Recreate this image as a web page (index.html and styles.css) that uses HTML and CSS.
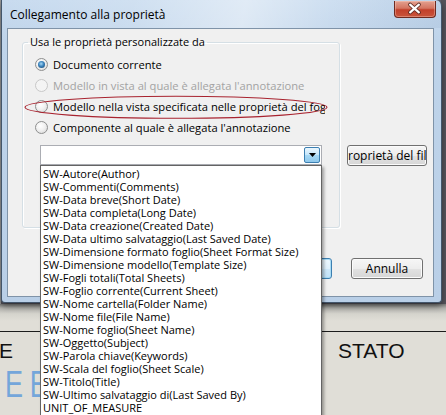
FILE: index.html
```html
<!DOCTYPE html>
<html lang="it">
<head>
<meta charset="utf-8">
<title>Collegamento alla proprietà</title>
<link rel="stylesheet" href="styles.css">
</head>
<body>
<div class="screen">
  <div class="desk">
    <div class="window">
      <div class="titlebar">
        <span class="title">Collegamento alla proprietà</span>
        <div class="close">
          <svg width="42" height="17" viewBox="0 0 42 17">
            <path d="M16.5 4.5 L25.5 12.5 M25.5 4.5 L16.5 12.5" stroke="#5b2a22" stroke-width="4" stroke-linecap="round"/>
            <path d="M16.5 4.5 L25.5 12.5 M25.5 4.5 L16.5 12.5" stroke="#ffffff" stroke-width="2.2" stroke-linecap="round"/>
          </svg>
        </div>
      </div>
      <div class="client">
        <div class="main">
          <fieldset class="group">
            <legend>Usa le proprietà personalizzate da</legend>
            <div class="radio"><span class="dot checked"></span><span class="lbl">Documento corrente</span></div>
            <div class="radio disabled"><span class="dot"></span><span class="lbl">Modello in vista al quale è allegata l'annotazione</span></div>
            <div class="radio"><span class="dot"></span><span class="lbl clip">Modello nella vista specificata nelle proprietà del foglio</span></div>
            <div class="radio"><span class="dot"></span><span class="lbl">Componente al quale è allegata l'annotazione</span></div>
            <div class="combo">
              <div class="combo-field"></div>
              <div class="combo-btn">
                <svg width="7" height="4" viewBox="0 0 7 4"><path d="M0 0 H7 L3.5 4 Z" fill="#000"/></svg>
              </div>
            </div>
          </fieldset>
          <div class="btn side"><span>Proprietà del file</span></div>
        </div>
        <div class="actions">
          <div class="btn ok">OK</div>
          <div class="btn cancel">Annulla</div>
        </div>
      </div>
    </div>
  </div>
  <div class="sheet">
    <div class="sheet-head"></div>
    <div class="labels">
      <span class="lab-e">E</span>
      <span class="lab-stato">STATO</span>
    </div>
    <div class="big"><span>EE</span></div>
  </div>
  <ul class="list">
    <li>SW-Autore(Author)</li>
    <li>SW-Commenti(Comments)</li>
    <li>SW-Data breve(Short Date)</li>
    <li>SW-Data completa(Long Date)</li>
    <li>SW-Data creazione(Created Date)</li>
    <li>SW-Data ultimo salvataggio(Last Saved Date)</li>
    <li>SW-Dimensione formato foglio(Sheet Format Size)</li>
    <li>SW-Dimensione modello(Template Size)</li>
    <li>SW-Fogli totali(Total Sheets)</li>
    <li>SW-Foglio corrente(Current Sheet)</li>
    <li>SW-Nome cartella(Folder Name)</li>
    <li>SW-Nome file(File Name)</li>
    <li>SW-Nome foglio(Sheet Name)</li>
    <li>SW-Oggetto(Subject)</li>
    <li>SW-Parola chiave(Keywords)</li>
    <li>SW-Scala del foglio(Sheet Scale)</li>
    <li>SW-Titolo(Title)</li>
    <li>SW-Ultimo salvataggio di(Last Saved By)</li>
    <li>UNIT_OF_MEASURE</li>
  </ul>
  <svg class="mark" width="446" height="140" viewBox="0 0 446 140">
    <ellipse cx="176" cy="107.3" rx="151" ry="11" fill="none" stroke="#a8232f" stroke-width="1.1"/>
  </svg>
</div>
</body>
</html>
```

FILE: styles.css
```css
* { box-sizing: border-box; }
html, body { margin: 0; padding: 0; }
body {
  width: 446px;
  height: 415px;
  overflow: hidden;
  background: #e0ded7;
  font-family: "Open Sans", "Noto Sans", sans-serif;
  font-size: 11px;
  color: #000;
}
.screen { position: relative; width: 446px; height: 415px; overflow: hidden; }

.desk {
  height: 304px;
  display: flex;
  padding-left: 1px;
  background: linear-gradient(90deg, #9a9a9a 0, #9a9a9a 1px, #55545c 1px);
}
.window {
  width: 441px;
  height: 303px;
  border: 1px solid #43566b;
  border-top: 0;
  border-radius: 0 6px 4px 4px;
  background: linear-gradient(180deg, #c8dbef 0, #bfd4ea 40px, #b9cfe7 100%);
  padding: 0 7px 5px 5px;
  display: flex;
  flex-direction: column;
  box-shadow: 0 3px 6px rgba(0, 0, 0, 0.45);
}
.titlebar {
  height: 28px;
  flex: none;
  display: flex;
  justify-content: space-between;
  align-items: flex-start;
  margin: 0 -7px 0 -5px;
  padding-right: 5px;
  padding-left: 8px;
  background: linear-gradient(100deg, rgba(255,255,255,0) 0, rgba(255,255,255,0.15) 30%, rgba(255,255,255,0.45) 55%, rgba(255,255,255,0.1) 75%, rgba(120,150,185,0.15) 100%);
}
.title {
  font-size: 12px;
  line-height: 16px;
  margin-top: 7px;
  color: #000;
}
.close {
  width: 42px;
  height: 17px;
  margin-top: 1px;
  border: 1px solid #6e2a20;
  border-top: 0;
  border-radius: 0 0 4px 4px;
  background: linear-gradient(180deg, #e3a190 0, #d47561 45%, #c2402b 55%, #c9553c 100%);
  box-shadow: inset 0 0 0 1px rgba(255, 220, 210, 0.35);
  display: flex;
}
.close svg { display: block; margin: -1px 0 0 -1px; }

.client {
  flex: 1;
  border: 1px solid #7f93a8;
  background: #f0f0f0;
  padding: 6px 10px 0 14px;
  display: flex;
  flex-direction: column;
}
.main { display: flex; align-items: flex-start; }
.group {
  margin: 0;
  width: 318px;
  height: 193px;
  flex: none;
  border: 1px solid #d5dfe5;
  border-radius: 3px;
  padding: 0 5px;
  box-shadow: 1px 1px 0 #fff, inset 1px 1px 0 #fff;
}
.group legend {
  padding: 0 2px;
  font-size: 11px;
  line-height: 14px;
}
.radio {
  height: 21px;
  display: flex;
  align-items: center;
  white-space: nowrap;
  font-size: 11.2px;
}
.radio:first-of-type { margin-top: 5px; }
.dot {
  width: 13px;
  height: 13px;
  flex: none;
  margin-left: 7px;
  border-radius: 50%;
  border: 1px solid #8e8f8f;
  background: radial-gradient(circle at 40% 35%, #ffffff 0, #f1f1f1 45%, #d3d3d3 100%);
}
.dot.checked::after {
  content: "";
  display: block;
  width: 7px;
  height: 7px;
  margin: 2px;
  border-radius: 50%;
  background: radial-gradient(circle at 45% 40%, #a8daf6 0, #3b83bd 45%, #163e63 100%);
}
.lbl { margin-left: 5px; }
.lbl.clip { max-width: 272px; overflow: hidden; }
.radio.disabled .lbl { color: #a3a3a3; }
.radio.disabled .dot { border-color: #c8c8c8; background: #f4f4f4; }

.combo {
  margin: 7px 0 0 12px;
  width: 282px;
  height: 20px;
  border: 1px solid #abadb3;
  background: #fff;
  display: flex;
  padding: 1px;
}
.combo-field { flex: 1; }
.combo-btn {
  width: 16px;
  height: 16px;
  border: 1px solid #3c7fb1;
  border-radius: 2px;
  background: linear-gradient(180deg, #eaf6fd 0, #c4e6fb 50%, #a7d9f5 50%, #8ec8ec 100%);
  display: flex;
  align-items: center;
  justify-content: center;
}
.combo-btn svg { display: block; }

.btn {
  height: 21px;
  flex: none;
  border: 1px solid #707070;
  border-radius: 3px;
  background: linear-gradient(180deg, #f6f6f6 0, #ededed 50%, #e2e2e2 50%, #d6d6d6 100%);
  box-shadow: inset 0 0 0 1px #fbfbfb;
  display: flex;
  align-items: center;
  justify-content: center;
  white-space: nowrap;
  overflow: hidden;
  font-size: 12px;
}
.btn.side { width: 80px; margin: 110px 0 0 7px; }
.actions {
  margin-top: 30px;
  display: flex;
  justify-content: flex-end;
  gap: 19px;
}
.btn.ok {
  width: 73px;
  border-color: #3c7fb1;
  background: linear-gradient(180deg, #eef8fe 0, #e0f1fc 50%, #cfe9fa 50%, #c2e2f7 100%);
  box-shadow: inset 0 0 0 1px #a9dcf5;
}
.btn.cancel { width: 72px; }

.sheet {
  height: 111px;
  background: linear-gradient(180deg, #7c7d7b 0, #b3b3ae 4px, #d5d4cd 10px, #e0ded7 17px);
}
.sheet-head { height: 28px; border-bottom: 1px solid #1c1c1c; }
.labels {
  margin-top: 7px;
  height: 24px;
  display: flex;
  justify-content: space-between;
  font-family: "Liberation Sans", Arial, sans-serif;
  font-size: 21px;
  line-height: 24px;
  color: #111;
}
.lab-e { margin-left: -1px; }
.lab-stato { width: 108px; }
.big {
  margin-top: 2px;
  height: 40px;
  padding-left: 5px;
  font-family: "Liberation Sans", Arial, sans-serif;
  font-size: 36px;
  line-height: 40px;
  color: #74a6da;
}
.big span {
  display: inline-block;
  letter-spacing: 9px;
  transform: scaleX(0.75);
  transform-origin: left center;
}

.list {
  position: absolute;
  left: 40px;
  top: 165px;
  width: 282px;
  margin: 0;
  padding: 1px 0 2px;
  list-style: none;
  background: #fff;
  border: 1px solid #646464;
  box-shadow: 2px 2px 3px rgba(0, 0, 0, 0.35);
  line-height: 13px;
  font-size: 11px;
}
.list li { padding-left: 2px; white-space: nowrap; }

.mark { position: absolute; left: 0; top: 0; pointer-events: none; }
```
